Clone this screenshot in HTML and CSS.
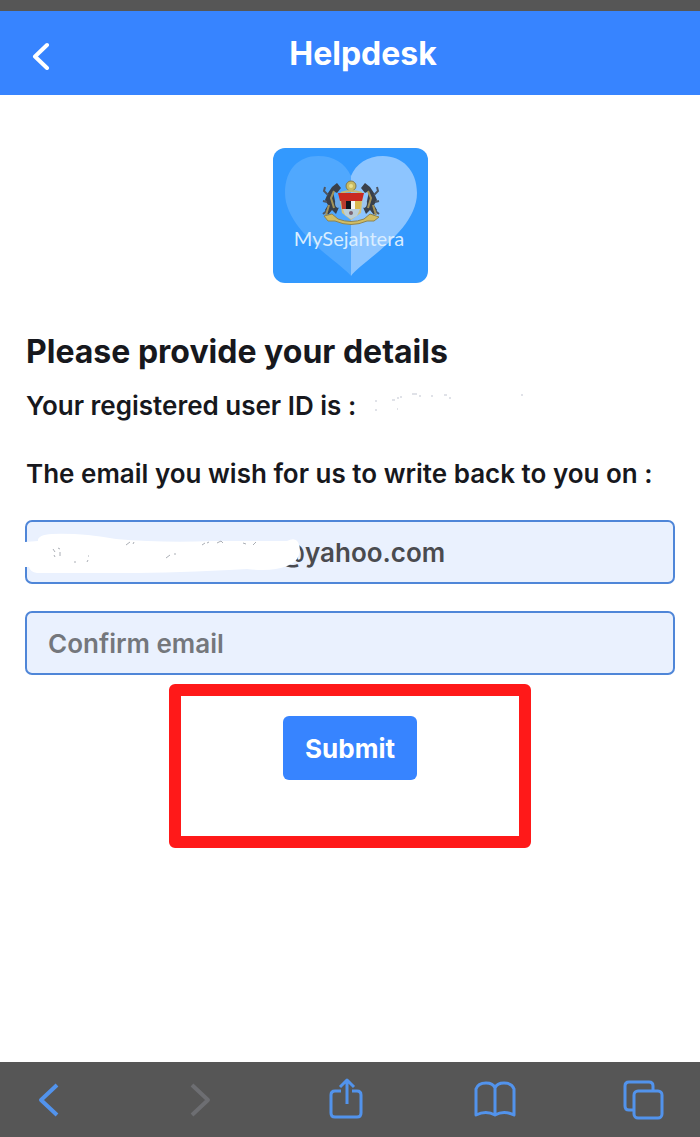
FILE: index.html
```html
<!DOCTYPE html>
<html lang="en">
<head>
<meta charset="utf-8">
<meta name="viewport" content="width=device-width, initial-scale=1">
<title>Helpdesk</title>
<link rel="stylesheet" href="styles.css">
</head>
<body>
<div class="status-strip"></div>
<header class="header">
  <button class="header-back" type="button" aria-label="Back">
    <svg width="20" height="30" viewBox="0 0 20 30"><path d="M15 5 3 16.500 15 28" fill="none" stroke="#fff" stroke-width="4" stroke-linecap="round" stroke-linejoin="round"/></svg>
  </button>
  <h1 class="header-title">Helpdesk</h1>
</header>
<main class="content">
  <svg class="logo" width="156" height="136" viewBox="0 0 156 136" role="img" aria-label="MySejahtera">
    <rect x="1" width="155" height="135" rx="12" fill="#3399fe"/>
    <path d="M79 128C69 115 13 83 13 45C13 21 27 8 46 8C62 8 73 15 79 28Z" fill="#50a8fe"/>
    <path d="M79 128C90 113 145 83 145 45C145 22 130 8 111 8C95 8 84 16 79 28Z" fill="#8dc5ff"/>
    <g class="crest" transform="translate(1 0)">
      <circle cx="78" cy="38" r="5" fill="#c9bb62" stroke="#7f7952"/>
      <circle cx="78" cy="38" r="2" fill="#e9df8e"/>
      <path d="M68 45Q78 41 89 45" fill="none" stroke="#c6b970" stroke-width="2"/>
      <path d="M64 35L68 40L64 45L60 43L62 53L67 57L63 66L59 62L55 67L52 62L55 57L52 52L55 45L59 39Z" fill="#39404b"/>
      <path d="M55 47L51 43L52 39M54 54L50 53M55 62L50 66" fill="none" stroke="#4d5663" stroke-width="2"/>
      <path d="M61 43L58 50L61 60M56 57L53 67" fill="none" stroke="#a3935a" stroke-width="2"/>
      <path d="M92 35L88 40L92 45L96 43L94 53L89 57L93 66L97 62L101 67L104 62L101 57L104 52L101 45L97 39Z" fill="#39404b"/>
      <path d="M101 47L105 43L104 39M102 54L106 53M101 62L106 66" fill="none" stroke="#4d5663" stroke-width="2"/>
      <path d="M95 43L98 50L95 60M100 57L103 67" fill="none" stroke="#a3935a" stroke-width="2"/>
      <ellipse cx="65" cy="55" rx="3" ry="5" fill="#6da9e8"/>
      <ellipse cx="91" cy="55" rx="3" ry="5" fill="#9ec6ef"/>
      <path d="M66 46H90L88 65L78 72L69 65Z" fill="#d3c37a"/>
      <path d="M65 45H91L89 53H67Z" fill="#c92920"/>
      <path d="M68 52H73V61H69Z" fill="#b93a2d"/>
      <path d="M73 53H78V61H73Z" fill="#11151c"/>
      <path d="M78 53H82V61H78Z" fill="#f4f5f5"/>
      <path d="M82 53H88L87 61H82Z" fill="#d9b950"/>
      <path d="M70 61H87L84 68L78 71L72 67Z" fill="#b8cfdb"/>
      <circle cx="78" cy="65" r="2" fill="#7d6470"/>
      <path d="M51 68L59 66L65 71Q78 76 91 71L97 66L106 69L101 73L94 73Q78 80 62 73L55 73Z" fill="#d2bd62" stroke="#8e8351"/>
    </g>
    <text class="logo-text" x="77" y="98" text-anchor="middle">MySejahtera</text>
  </svg>
  <form class="form">
    <h2 class="form-title">Please provide your details</h2>
    <p class="form-line">Your registered user ID is :
      <svg class="residue" width="164" height="22" viewBox="0 0 164 22" aria-hidden="true"><path d="M13 7v2M13 16v2M29 7h3M34 5h2M37 4h2M49 1h5M56 3h2M68 3h2M81 2h3M86 5h2M34 16h1M158 2h2" stroke="#ccd0da" stroke-width="2" opacity=".6"/></svg>
    </p>
    <label class="form-line form-label" for="email">The email you wish for us to write back to you on :</label>
    <div class="email-box">
      <input class="field field-masked" id="email" type="text" value="@yahoo.com">
      <svg class="mask" width="282" height="42" viewBox="0 0 282 42" aria-hidden="true">
        <path d="M0 10L13 9Q12 3 27 2Q58 1 91 7Q137 11 188 9L262 9Q270 5 273 10Q276 16 274 23Q271 31 262 34Q247 40 222 37Q150 41 100 41L12 41Q5 40 4 35L0 35Z" fill="#fff"/>
        <path d="M28 17l2 3M35 20v4M33 16l2 1M29 23l1 2M49 30h2M62 30l1-2M63 24h1M101 13l4-3M108 12l1-2M141 26l4-3M149 22h2M177 13l3-2M182 11l2-1M192 11l4-2 2 2M218 11l3 1M228 13l3-3" stroke="#aaaeb5" fill="none"/>
      </svg>
    </div>
    <input class="field" type="text" placeholder="Confirm email" aria-label="Confirm email">
    <div class="highlight"><button class="submit" type="button">Submit</button></div>
  </form>
</main>
<nav class="toolbar" aria-label="Browser">
  <button class="tool tool-arrow" type="button" aria-label="Back"><svg width="44" height="44" viewBox="0 0 44 44"><path d="M30 7 14 22 30 37"/></svg></button>
  <button class="tool tool-arrow tool-off" type="button" aria-label="Forward" disabled><svg width="44" height="44" viewBox="0 0 44 44"><path d="M16 7 32 22 16 37"/></svg></button>
  <button class="tool" type="button" aria-label="Share"><svg width="44" height="44" viewBox="0 0 44 44"><path d="M17 13H11Q7 13 7 17V35Q7 39 11 39H33Q37 39 37 35V17Q37 13 33 13H28M23 26V2M16 9L23 2L30 9"/></svg></button>
  <button class="tool" type="button" aria-label="Bookmarks"><svg width="44" height="44" viewBox="0 0 44 44"><path d="M22 10Q20 5 13 5Q5 5 3 11V37Q13 32 22 37Q31 32 41 37V11Q39 5 31 5Q24 5 22 10ZV37"/></svg></button>
  <button class="tool" type="button" aria-label="Tabs"><svg width="44" height="44" viewBox="0 0 44 44"><rect x="13" y="13" width="28" height="27" rx="4"/><path d="M12 32H8Q4 32 4 28V8Q4 4 8 4H28Q32 4 32 8V12"/></svg></button>
</nav>
</body>
</html>
```
FILE: styles.css
```css
* {
  box-sizing: border-box;
}

body {
  margin: 0;
  min-height: 100vh;
  display: flex;
  flex-direction: column;
  background: #fff;
  color: #17181d;
  font-family: Inter, "Liberation Sans", sans-serif;
}

button,
input {
  font: inherit;
}

.status-strip {
  height: 11px;
  background: #565656;
}

.header {
  display: grid;
  grid-template-columns: 70px 1fr 44px;
  align-items: center;
  height: 84px;
  padding: 0 20px;
  background: #3784ff;
  color: #fff;
}

.header-back {
  display: flex;
  align-items: center;
  justify-content: center;
  width: 44px;
  height: 44px;
  padding: 4px 0 0;
  border: 0;
  background: none;
}

.header-title {
  margin: 0;
  padding-top: 2px;
  font-size: 32px;
  line-height: 40px;
  font-weight: 700;
  text-align: center;
}

.content {
  flex: 1;
  display: flex;
  flex-direction: column;
  align-items: center;
  padding: 53px 25px 0;
}

.logo-text {
  font-family: Lato, sans-serif;
  font-size: 20px;
  fill: #d9edff;
}

.form {
  display: flex;
  flex-direction: column;
  align-self: stretch;
  margin-top: 48px;
}

.form-title {
  margin: 0;
  padding-left: 1px;
  font-size: 32px;
  line-height: 40px;
  font-weight: 700;
}

.form-line {
  margin: 18px 0 0;
  padding-left: 1px;
  font-size: 26px;
  line-height: 32px;
  font-weight: 600;
}

.form-label {
  margin: 36px 0 30px;
}

.email-box {
  position: relative;
  margin-bottom: 27px;
}

.field {
  display: block;
  width: 100%;
  height: 64px;
  padding: 0 21px;
  border: 2px solid #4f86d8;
  border-radius: 7px;
  background: #eaf1fe;
  color: #4a4b4f;
  font-size: 26px;
  font-weight: 600;
}

.field::placeholder {
  color: #74777c;
  opacity: 1;
}

.field-masked {
  padding-left: 252px;
}

.mask {
  position: absolute;
  left: 0;
  top: 12px;
}

.highlight {
  align-self: center;
  display: flex;
  justify-content: center;
  width: 362px;
  max-width: 100%;
  margin-top: 9px;
  padding: 20px 0 56px;
  border: 12px solid #ff1919;
  border-radius: 6px;
}

.submit {
  height: 64px;
  padding: 0 22px;
  border: 0;
  border-radius: 6px;
  background: #3784ff;
  color: #fff;
  font-size: 26px;
  font-weight: 700;
}

.toolbar {
  display: flex;
  align-items: center;
  justify-content: space-between;
  height: 75px;
  padding: 0 35px 0 27px;
  background: #565656;
}

.tool {
  display: flex;
  padding: 0;
  border: 0;
  background: none;
  color: #5293ec;
}

.tool-off {
  color: #6d6e72;
}

.tool svg {
  fill: none;
  stroke: currentColor;
  stroke-width: 3;
  stroke-linejoin: round;
}

.tool-arrow svg {
  stroke-width: 4;
}
```
